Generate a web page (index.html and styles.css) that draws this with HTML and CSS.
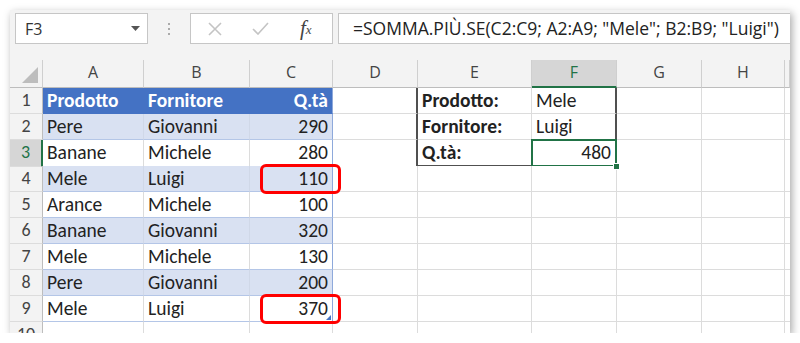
FILE: index.html
```html
<!DOCTYPE html>
<html>
	<head>
		<meta charset=utf-8>
		<title>SOMMA.PIÙ.SE</title>
		<link rel="stylesheet" href="styles.css">
	</head>
	<body>
		<div class="frame">
			<div class="toolbar">
				<div class="namebox">
					<span>F3</span>
					<svg class="drop" width="9" height="5" viewBox="0 0 9 5"><path d="M0 0h9L4.5 5z" fill="#555"/></svg>
				</div>
				<div class="grip"><i></i><i></i><i></i></div>
				<div class="fxbox">
					<svg width="14" height="14" viewBox="0 0 14 14"><path d="M1 1l12 12M13 1L1 13" stroke="#c4c4c4" stroke-width="1.6" fill="none"/></svg>
					<svg width="17" height="13" viewBox="0 0 17 13"><path d="M1 7l5 5L16 1" stroke="#c4c4c4" stroke-width="1.6" fill="none"/></svg>
					<span class="fx">f<sub>x</sub></span>
				</div>
				<div class="formula">=SOMMA.PIÙ.SE(C2:C9; A2:A9; "Mele"; B2:B9; "Luigi")</div>
			</div>

			<div class="sheet">
				<div class="row head">
					<div class="corner"><span class="tri"></span></div>
					<div>A</div><div>B</div><div>C</div><div>D</div><div>E</div>
					<div class="cur">F</div><div>G</div><div>H</div><div></div>
				</div>

				<div class="row">
					<div class="num">1</div>
					<div class="c th">Prodotto</div><div class="c th">Fornitore</div><div class="c th r">Q.tà</div>
					<div class="c box-l"></div>
					<div class="c lbl">Prodotto:</div><div class="c box-r">Mele</div>
					<div class="c"></div><div class="c"></div><div class="c"></div>
				</div>
				<div class="row">
					<div class="num">2</div>
					<div class="c t band">Pere</div><div class="c t band">Giovanni</div><div class="c t band r tr">290</div>
					<div class="c box-l"></div>
					<div class="c lbl">Fornitore:</div><div class="c box-r">Luigi</div>
					<div class="c"></div><div class="c"></div><div class="c"></div>
				</div>
				<div class="row">
					<div class="num cur">3</div>
					<div class="c t">Banane</div><div class="c t">Michele</div><div class="c t r tr">280</div>
					<div class="c box-l"></div>
					<div class="c lbl box-b">Q.tà:</div><div class="c box-r box-b r selected">480</div>
					<div class="c"></div><div class="c"></div><div class="c"></div>
				</div>
				<div class="row">
					<div class="num">4</div>
					<div class="c t band">Mele</div><div class="c t band">Luigi</div><div class="c t band r tr mark">110</div>
					<div class="c"></div><div class="c"></div><div class="c"></div>
					<div class="c"></div><div class="c"></div><div class="c"></div>
				</div>
				<div class="row">
					<div class="num">5</div>
					<div class="c t">Arance</div><div class="c t">Michele</div><div class="c t r tr">100</div>
					<div class="c"></div><div class="c"></div><div class="c"></div>
					<div class="c"></div><div class="c"></div><div class="c"></div>
				</div>
				<div class="row">
					<div class="num">6</div>
					<div class="c t band">Banane</div><div class="c t band">Giovanni</div><div class="c t band r tr">320</div>
					<div class="c"></div><div class="c"></div><div class="c"></div>
					<div class="c"></div><div class="c"></div><div class="c"></div>
				</div>
				<div class="row">
					<div class="num">7</div>
					<div class="c t">Mele</div><div class="c t">Michele</div><div class="c t r tr">130</div>
					<div class="c"></div><div class="c"></div><div class="c"></div>
					<div class="c"></div><div class="c"></div><div class="c"></div>
				</div>
				<div class="row">
					<div class="num">8</div>
					<div class="c t band">Pere</div><div class="c t band">Giovanni</div><div class="c t band r tr">200</div>
					<div class="c"></div><div class="c"></div><div class="c"></div>
					<div class="c"></div><div class="c"></div><div class="c"></div>
				</div>
				<div class="row">
					<div class="num">9</div>
					<div class="c t">Mele</div><div class="c t">Luigi</div><div class="c t r tr mark resize">370</div>
					<div class="c"></div><div class="c"></div><div class="c"></div>
					<div class="c"></div><div class="c"></div><div class="c"></div>
				</div>
				<div class="row">
					<div class="num">10</div>
					<div class="c"></div><div class="c"></div><div class="c"></div>
					<div class="c"></div><div class="c"></div><div class="c"></div>
					<div class="c"></div><div class="c"></div><div class="c"></div>
				</div>
			</div>
		</div>
	</body>
</html>
```

FILE: styles.css
```css
body { margin: 0; padding: 0; background: #fff; }

.frame {
	width: 780px; height: 323px;
	margin: 10px 0 0 10px;
	overflow: hidden;
	background: #f3f3f3;
	box-shadow: 2px 3px 8px rgba(0, 0, 0, 0.35);
}

/* formula bar */
.toolbar {
	display: flex;
	height: 47px;
	padding: 3px 0 0 5px;
	box-sizing: border-box;
	font-family: 'Open Sans', 'Noto Sans', sans-serif;
}
.toolbar > div { height: 31px; box-sizing: border-box; }
.namebox {
	width: 133px;
	display: flex; align-items: center; justify-content: space-between;
	padding: 0 7px 0 9px;
	background: #fff;
	border: 1px solid #c6c6c6;
	font-size: 16px; color: #333;
}
.grip {
	width: 42px;
	display: flex; flex-direction: column; align-items: center; justify-content: center;
	gap: 3px;
}
.grip i { width: 2px; height: 2px; background: #aaa; }
.fxbox {
	width: 143px;
	display: flex; align-items: center;
	padding: 0 12px 0 17px;
	gap: 30px;
	background: #fff;
	border: 1px solid #c6c6c6;
}
.fx {
	font-family: 'Liberation Serif', serif;
	font-style: italic;
	font-size: 21px;
	color: #444;
	margin-left: 1px;
}
.fx sub { font-size: 13px; vertical-align: 1px; margin-left: 0; }
.formula {
	flex: 1;
	margin-left: 5px; margin-right: -1px;
	padding: 0 0 0 14px;
	background: #fff;
	border: 1px solid #c6c6c6;
	font-size: 17.5px; line-height: 29px; color: #222;
	white-space: nowrap;
}

/* grid */
.sheet {
	font-family: Carlito, Lato, sans-serif;
	font-size: 19.5px;
	color: #222;
}
.row {
	display: grid;
	grid-template-columns: 33px 101px 106px 83px 85px 114px 85px 85px 83px 5px;
	height: 26px;
}
.row > div {
	box-sizing: border-box;
	border-right: 1px solid #dcdcdc;
	border-bottom: 1px solid #dcdcdc;
	line-height: 25px;
	white-space: nowrap;
}
.row .c { background: #fff; padding: 0 4px; position: relative; }
.r { text-align: right; }

.row.head { height: 28px; padding-top: 3px; }
.row.head > div {
	border-right-color: #cfcfcf;
	border-bottom-color: #bdbdbd;
	font-family: 'Open Sans', sans-serif;
	font-size: 16px;
	line-height: 24px;
	text-align: center;
	color: #444;
}
.row.head > .cur {
	background: #d6d6d6;
	color: #217346;
	border-bottom: 2px solid #217346;
}
.corner { position: relative; }
.tri {
	position: absolute; right: 4px; bottom: 4px;
	width: 0; height: 0;
	border-left: 16px solid transparent;
	border-bottom: 16px solid #bdbdbd;
}

.num {
	text-align: center;
	color: #444;
	font-size: 18px;
	border-right-color: #bdbdbd !important;
}
.num.cur {
	background: #d6d6d6;
	color: #217346;
	border-right: 2px solid #217346 !important;
}

/* table A1:C9 */
.row .th {
	background: #4472c4;
	color: #fff;
	font-weight: bold;
	border-color: #4472c4;
}
.row .t { border-bottom-color: #b4c6e7; }
.row .band { background: #d9e1f2; border-right-color: #d0d8e8; }
.row .tr { border-right-color: #8ea9db; }
.row .th.r { border-right-color: #8ea9db; }

/* lookup box E1:F3 */
.row .box-l { border-right: 2px solid #505050; }
.row .box-r { border-right: 2px solid #505050; }
.row .box-b { border-bottom: 2px solid #505050; }
.lbl { font-weight: bold; }

.selected::after {
	content: '';
	position: absolute;
	left: -1px; top: -1px; right: -2px; bottom: -2px;
	border: 2px solid #217346;
}
.selected::before {
	content: '';
	position: absolute;
	right: -5px; bottom: -5px;
	width: 5px; height: 5px;
	background: #217346;
	border: 1px solid #fff;
	z-index: 2;
}

.mark::after {
	content: '';
	position: absolute;
	left: 10px; top: -2px; right: -9px; bottom: -3px;
	border: 3px solid #f00;
	border-radius: 6px;
	z-index: 3;
}
.resize::before {
	content: '';
	position: absolute;
	right: 1px; bottom: 1px;
	width: 0; height: 0;
	border-left: 5px solid transparent;
	border-bottom: 5px solid #4472c4;
}
```
